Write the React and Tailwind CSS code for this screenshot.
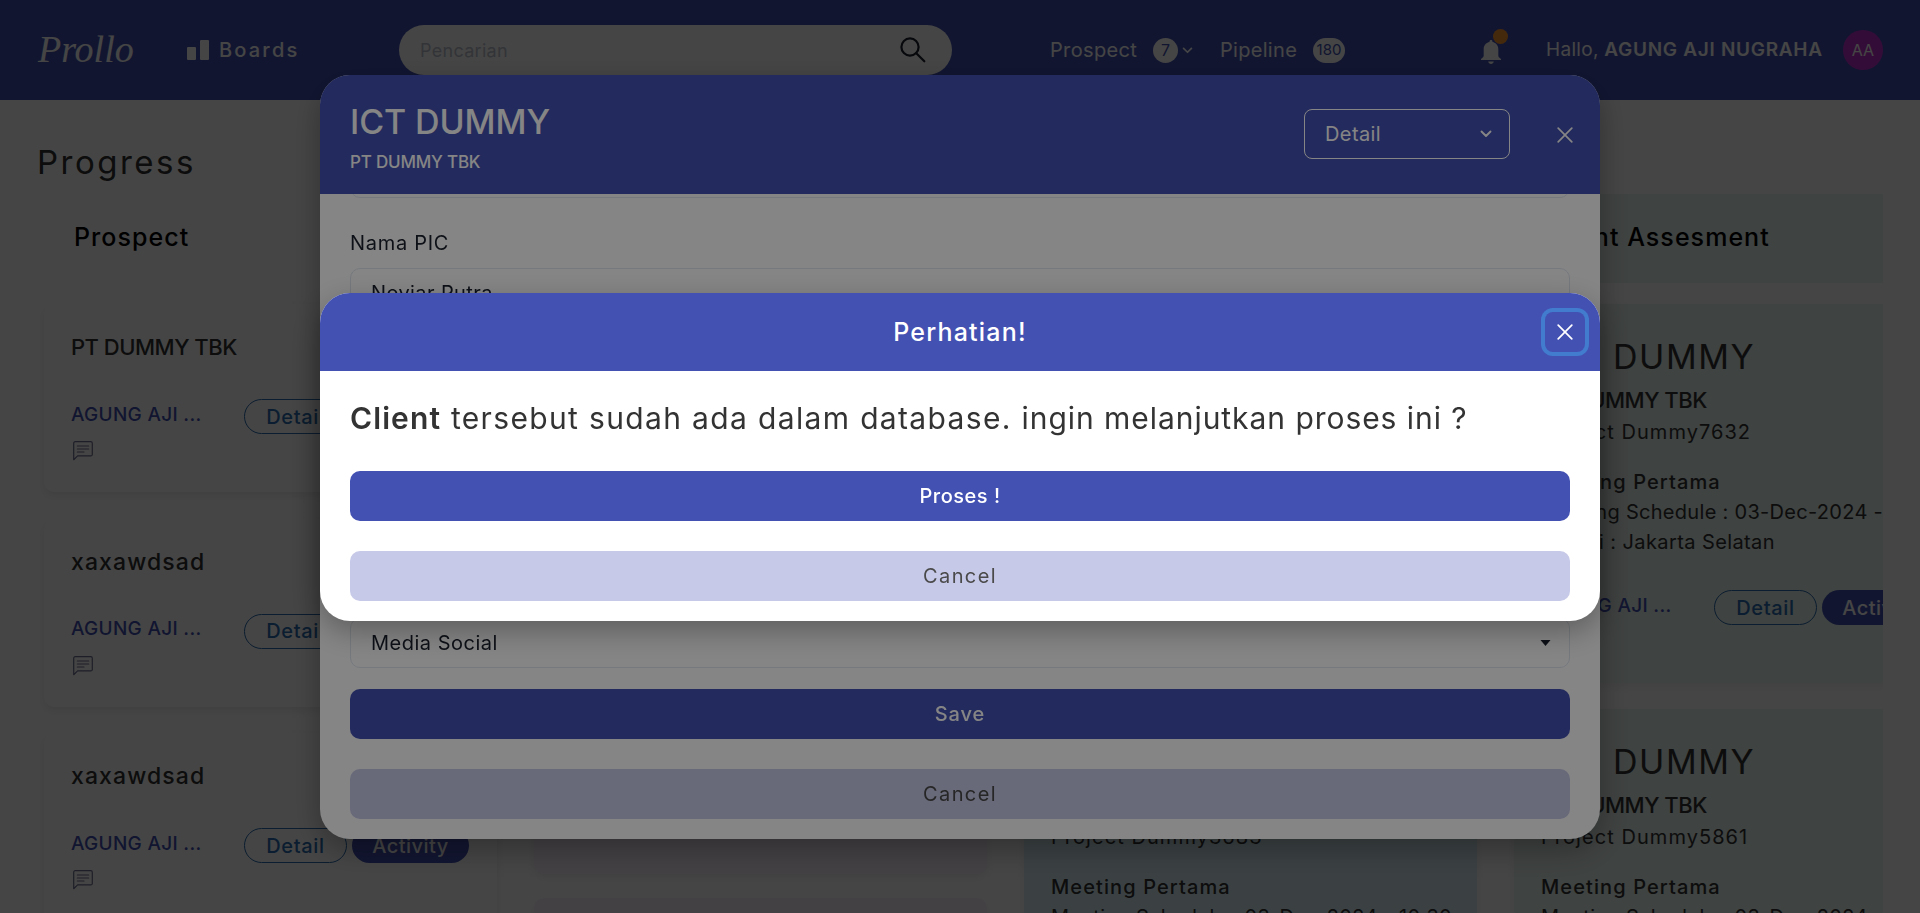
import React from 'react';

function Chevron({ className }) {
  return (
    <svg viewBox="0 0 12 8" className={className} fill="none" stroke="currentColor" strokeWidth="1.900" strokeLinecap="round" strokeLinejoin="round">
      <path d="M1.500 1.500 6 6l4.500-4.500" />
    </svg>
  );
}

function CloseIcon() {
  return (
    <svg viewBox="0 0 16 16" className="size-4" fill="none" stroke="currentColor" strokeWidth="1.700" strokeLinecap="round">
      <path d="M1.200 1.200 14.800 14.800M14.800 1.200 1.200 14.800" />
    </svg>
  );
}

function ChatIcon() {
  return (
    <svg viewBox="0 0 20 20" className="mt-[7px] ml-[2px] size-5 text-[#6d7193]" fill="none" stroke="currentColor" strokeWidth="1.200" strokeLinejoin="round" strokeLinecap="round">
      <path d="M.7 18.700V2.200C.7 1.300 1.300.7 2.200.7h15.600c.9 0 1.500.6 1.500 1.500v11.200c0 .9-.6 1.500-1.500 1.500H4.600L.7 18.700Z" />
      <path d="M4.300 5h11.400M4.300 8h11.400M4.300 11h6.700" />
    </svg>
  );
}

function CardActions() {
  return (
    <div className="flex h-[35px] items-center">
      <span className="w-[173px] shrink-0 pb-[3px] text-[19px] font-medium tracking-[0.3px] text-[#4351b3]">AGUNG AJI ...</span>
      <span className="flex h-[35px] w-[103px] shrink-0 items-center justify-center rounded-full border border-[#2b6cb0] text-[20px] font-medium tracking-[0.7px] text-[#2b6cb0]">Detail</span>
      <span className="ml-[5px] flex h-[35px] w-[117px] shrink-0 items-center justify-center rounded-full bg-[#4351b3] text-[20px] font-medium tracking-[0.45px] text-white">Activity</span>
    </div>
  );
}

function ProspectCard({ title }) {
  return (
    <div className="mb-[26.500px] h-[188px] shrink-0 rounded-[10px] bg-white pt-[25px] pl-[27px] shadow-[0_4px_8px_rgba(0,0,0,0.08)]">
      <div className={title === 'PT DUMMY TBK' ? 'h-9 text-[22px] leading-9 font-medium tracking-[-0.5px]' : 'h-9 text-[23px] leading-9 font-medium tracking-[1.100px]'}>{title}</div>
      <div className="mt-[34px]">
        <CardActions />
        <ChatIcon />
      </div>
    </div>
  );
}

function MeetingCard({ project, tone }) {
  return (
    <div className={`mb-[26px] h-[379px] shrink-0 rounded-[10px] pt-[30px] pl-[27px] shadow-[0_4px_8px_rgba(0,0,0,0.06)] ${tone}`}>
      <div className="h-[45px] text-[34px] leading-[45px] tracking-[1.600px]">ICT DUMMY</div>
      <div className="h-[42px] text-[22px] leading-[42px] font-medium tracking-[-0.5px]">PT DUMMY TBK</div>
      <div className="h-[22px] text-[20px] leading-[22px] tracking-[1.050px]">{project}</div>
      <div className="mt-6 text-[20px] leading-[30px]">
        <div className="font-medium tracking-[1.100px]">Meeting Pertama</div>
        <div className="tracking-[0.3px]">Meeting Schedule : 03-Dec-2024 - 10:30</div>
        <div className="tracking-[0.4px]">Lokasi : Jakarta Selatan</div>
      </div>
      <div className="mt-[33px]">
        <CardActions />
      </div>
    </div>
  );
}

function Column({ title, tone, children }) {
  return (
    <section className="flex w-[453px] shrink-0 flex-col">
      <div className={`mb-[21px] flex h-[89px] shrink-0 items-center rounded-[8px] pb-[2px] pl-[30px] text-[25px] font-medium tracking-[1.050px] text-black ${tone}`}>{title}</div>
      {children}
    </section>
  );
}

function Navbar() {
  return (
    <nav className="flex h-[100px] items-center bg-[#4351b3] pl-[38px] text-[20px] text-white">
      <span className="w-[149px] shrink-0 pb-[2px] font-['Liberation_Serif',cursive] text-[38px] italic">Prollo</span>
      <span className="flex w-[212px] shrink-0 items-center gap-[10px] font-medium tracking-[2.200px]">
        <svg viewBox="0 0 22 20" className="h-5 w-[22px]" fill="currentColor">
          <rect x="0" y="7" width="9" height="13" rx="1" />
          <rect x="13" y="0" width="9" height="20" rx="1" />
        </svg>
        Boards
      </span>
      <div className="flex h-[50px] w-[553px] shrink-0 items-center justify-between rounded-[25px] bg-white pr-[26px] pl-[21px]">
        <span className="text-[18px] tracking-[0.3px] text-[#bcc2ce]">Pencarian</span>
        <svg viewBox="0 0 26 26" className="size-[26px] text-[#1a202c]" fill="none" stroke="currentColor" strokeWidth="2.200" strokeLinecap="round">
          <circle cx="10" cy="10" r="8.600" />
          <path d="M16.300 16.300 24.300 24.300" />
        </svg>
      </div>
      <span className="ml-[98px] w-[103px] shrink-0 tracking-[0.35px]">Prospect</span>
      <span className="flex size-[25px] shrink-0 items-center justify-center rounded-full bg-white text-[16px] text-[#4351b3]">7</span>
      <Chevron className="ml-1 h-[7px] w-[11px] shrink-0" />
      <span className="ml-[27px] w-[93px] shrink-0 tracking-[0.3px]">Pipeline</span>
      <span className="flex h-[25px] w-8 shrink-0 items-center justify-center rounded-full bg-white text-[15px] text-[#4351b3]">180</span>
      <span className="relative ml-[136px] w-[65px] shrink-0">
        <svg viewBox="0 0 20 24" className="mt-[3px] h-6 w-5" fill="currentColor">
          <path d="M10 0c.9 0 1.500.6 1.500 1.500v.5c3.500.7 5.800 3.400 5.800 7v6.500c0 1.200.9 2.300 2.700 3.500v1H0v-1c1.800-1.200 2.700-2.300 2.700-3.500V9c0-3.600 2.300-6.300 5.800-7v-.5C8.500.6 9.100 0 10 0Z" />
          <path d="M7.200 21.500h5.600c-.3 1.600-1.400 2.500-2.800 2.500s-2.500-.9-2.800-2.500Z" />
        </svg>
        <span className="absolute -top-[8px] left-[12px] size-[15px] rounded-full bg-[#ff9a33]" />
      </span>
      <span className="w-[297px] shrink-0 whitespace-pre text-[19px]"><span className="tracking-[0.3px]">Hallo, </span><span className="font-semibold tracking-[0.7px]">AGUNG AJI NUGRAHA</span></span>
      <span className="flex size-10 shrink-0 items-center justify-center rounded-full bg-[#bf30cc] text-[16px]">AA</span>
    </nav>
  );
}

function Board() {
  return (
    <main className="pl-[38px] text-[#333]">
      <h1 className="-ml-[1px] mt-[38px] h-[49px] text-[33px] leading-[49px] tracking-[2.500px]">Progress</h1>
      <div className="mt-[7px] flex h-[719px] w-[1845px] gap-[37px] overflow-hidden pl-[6px] whitespace-nowrap">
        <Column title="Prospect" tone="bg-white">
          <ProspectCard title="PT DUMMY TBK" />
          <ProspectCard title="xaxawdsad" />
          <ProspectCard title="xaxawdsad" />
        </Column>
        <Column title="" tone="bg-[#fbf1fd]">
          <div className="mb-6 h-[570px] shrink-0 rounded-[10px] bg-[#fbf1fd] shadow-[0_4px_8px_rgba(0,0,0,0.06)]" />
          <div className="h-[200px] shrink-0 rounded-[10px] bg-[#fbf1fd] shadow-[0_4px_8px_rgba(0,0,0,0.06)]" />
        </Column>
        <Column title="" tone="bg-[#daf1f8]">
          <MeetingCard project="Project Dummy8411" tone="bg-[#daf1f8]" />
          <MeetingCard project="Project Dummy3683" tone="bg-[#daf1f8]" />
        </Column>
        <Column title="Client Assesment" tone="bg-[#e8f5f0]">
          <MeetingCard project="Project Dummy7632" tone="bg-[#e8f5f0]" />
          <MeetingCard project="Project Dummy5861" tone="bg-[#e8f5f0]" />
        </Column>
      </div>
    </main>
  );
}

function DetailModal() {
  return (
    <div className="fixed inset-0 flex items-start justify-center bg-black/48 pt-[75px]">
      <div className="flex h-[764px] w-[1280px] flex-col overflow-hidden rounded-[30px] bg-white shadow-[0_10px_30px_rgba(0,0,0,0.3)]">
        <header className="flex h-[119px] shrink-0 items-center bg-[#4351b3] pr-[27px] pl-[30px] text-white">
          <div className="grow pt-[7px]">
            <div className="h-[44px] text-[34px] leading-[44px] font-medium tracking-[-0.1px]">ICT DUMMY</div>
            <div className="mt-[3px] h-[30px] text-[17px] leading-[30px] font-medium tracking-[-0.2px]">PT DUMMY TBK</div>
          </div>
          <div className="mb-[1px] flex h-[50px] w-[206px] items-center justify-between rounded-[8px] border border-white pr-[17px] pl-5 text-[20px] tracking-[0.4px]">
            Detail
            <Chevron className="h-2 w-3" />
          </div>
          <span className="ml-[47px]"><CloseIcon /></span>
        </header>
        <div className="grow overflow-hidden px-[30px] text-[20px] text-[#1a202c]">
          <div className="-mt-[46px] h-[50px] rounded-[10px] border border-[#e2e8f0]" />
          <div className="mt-[30px] mb-[10px] h-[30px] leading-[30px] tracking-[0.7px]">Nama PIC</div>
          <div className="flex h-[50px] items-center rounded-[10px] border border-[#e2e8f0] pl-5 tracking-[0.4px]">Noviar Putra</div>
          <div className="mt-[300px] flex h-[50px] items-center justify-between rounded-[10px] border border-[#e2e8f0] pr-[18px] pl-5 tracking-[0.5px]">
            Media Social
            <svg viewBox="0 0 11 6" className="h-[6px] w-[11px]" fill="currentColor"><path d="M.5 0h10L5.500 6Z" /></svg>
          </div>
          <div className="mt-[21px] flex h-[50px] items-center justify-center rounded-[10px] bg-[#4351b3] font-medium tracking-[0.9px] text-white">Save</div>
          <div className="mt-[30px] flex h-[50px] items-center justify-center rounded-[10px] bg-[#c7c9e8] tracking-[1.400px] text-[#4a4a4a]">Cancel</div>
        </div>
      </div>
    </div>
  );
}

function ConfirmModal() {
  return (
    <div className="fixed inset-0 flex items-start justify-center bg-black/48 pt-[293px]">
      <div className="h-[328px] w-[1280px] overflow-hidden rounded-[30px] bg-white shadow-[0_10px_30px_rgba(0,0,0,0.3)]">
        <header className="flex h-[78px] items-center bg-[#4351b3] pr-[15px] pl-[55px] text-white">
          <span className="grow pt-[1px] text-center text-[25px] font-medium tracking-[1.200px]">Perhatian!</span>
          <button className="flex size-10 items-center justify-center rounded-[8px] shadow-[0_0_0_4px_#427ccf]"><CloseIcon /></button>
        </header>
        <div className="px-[30px] text-[20px]">
          <p className="mt-[25px] h-[45px] text-[30px] leading-[45px] whitespace-nowrap text-[#333]">
            <span className="font-semibold tracking-[1.100px]">Client</span>
            <span className="tracking-[1.350px]"> tersebut sudah ada dalam database. </span>
            <span className="tracking-[0.950px]">ingin melanjutkan proses ini ?</span>
          </p>
          <div className="mt-[30px] flex h-[50px] items-center justify-center rounded-[10px] bg-[#4351b3] font-medium tracking-[0.5px] text-white">Proses !</div>
          <div className="mt-[30px] flex h-[50px] items-center justify-center rounded-[10px] bg-[#c7c9e8] tracking-[1.400px] text-[#4a4a4a]">Cancel</div>
        </div>
      </div>
    </div>
  );
}

export default function App() {
  return (
    <div className="h-screen overflow-hidden bg-white font-['Inter',sans-serif]">
      <Navbar />
      <Board />
      <DetailModal />
      <ConfirmModal />
    </div>
  );
}
